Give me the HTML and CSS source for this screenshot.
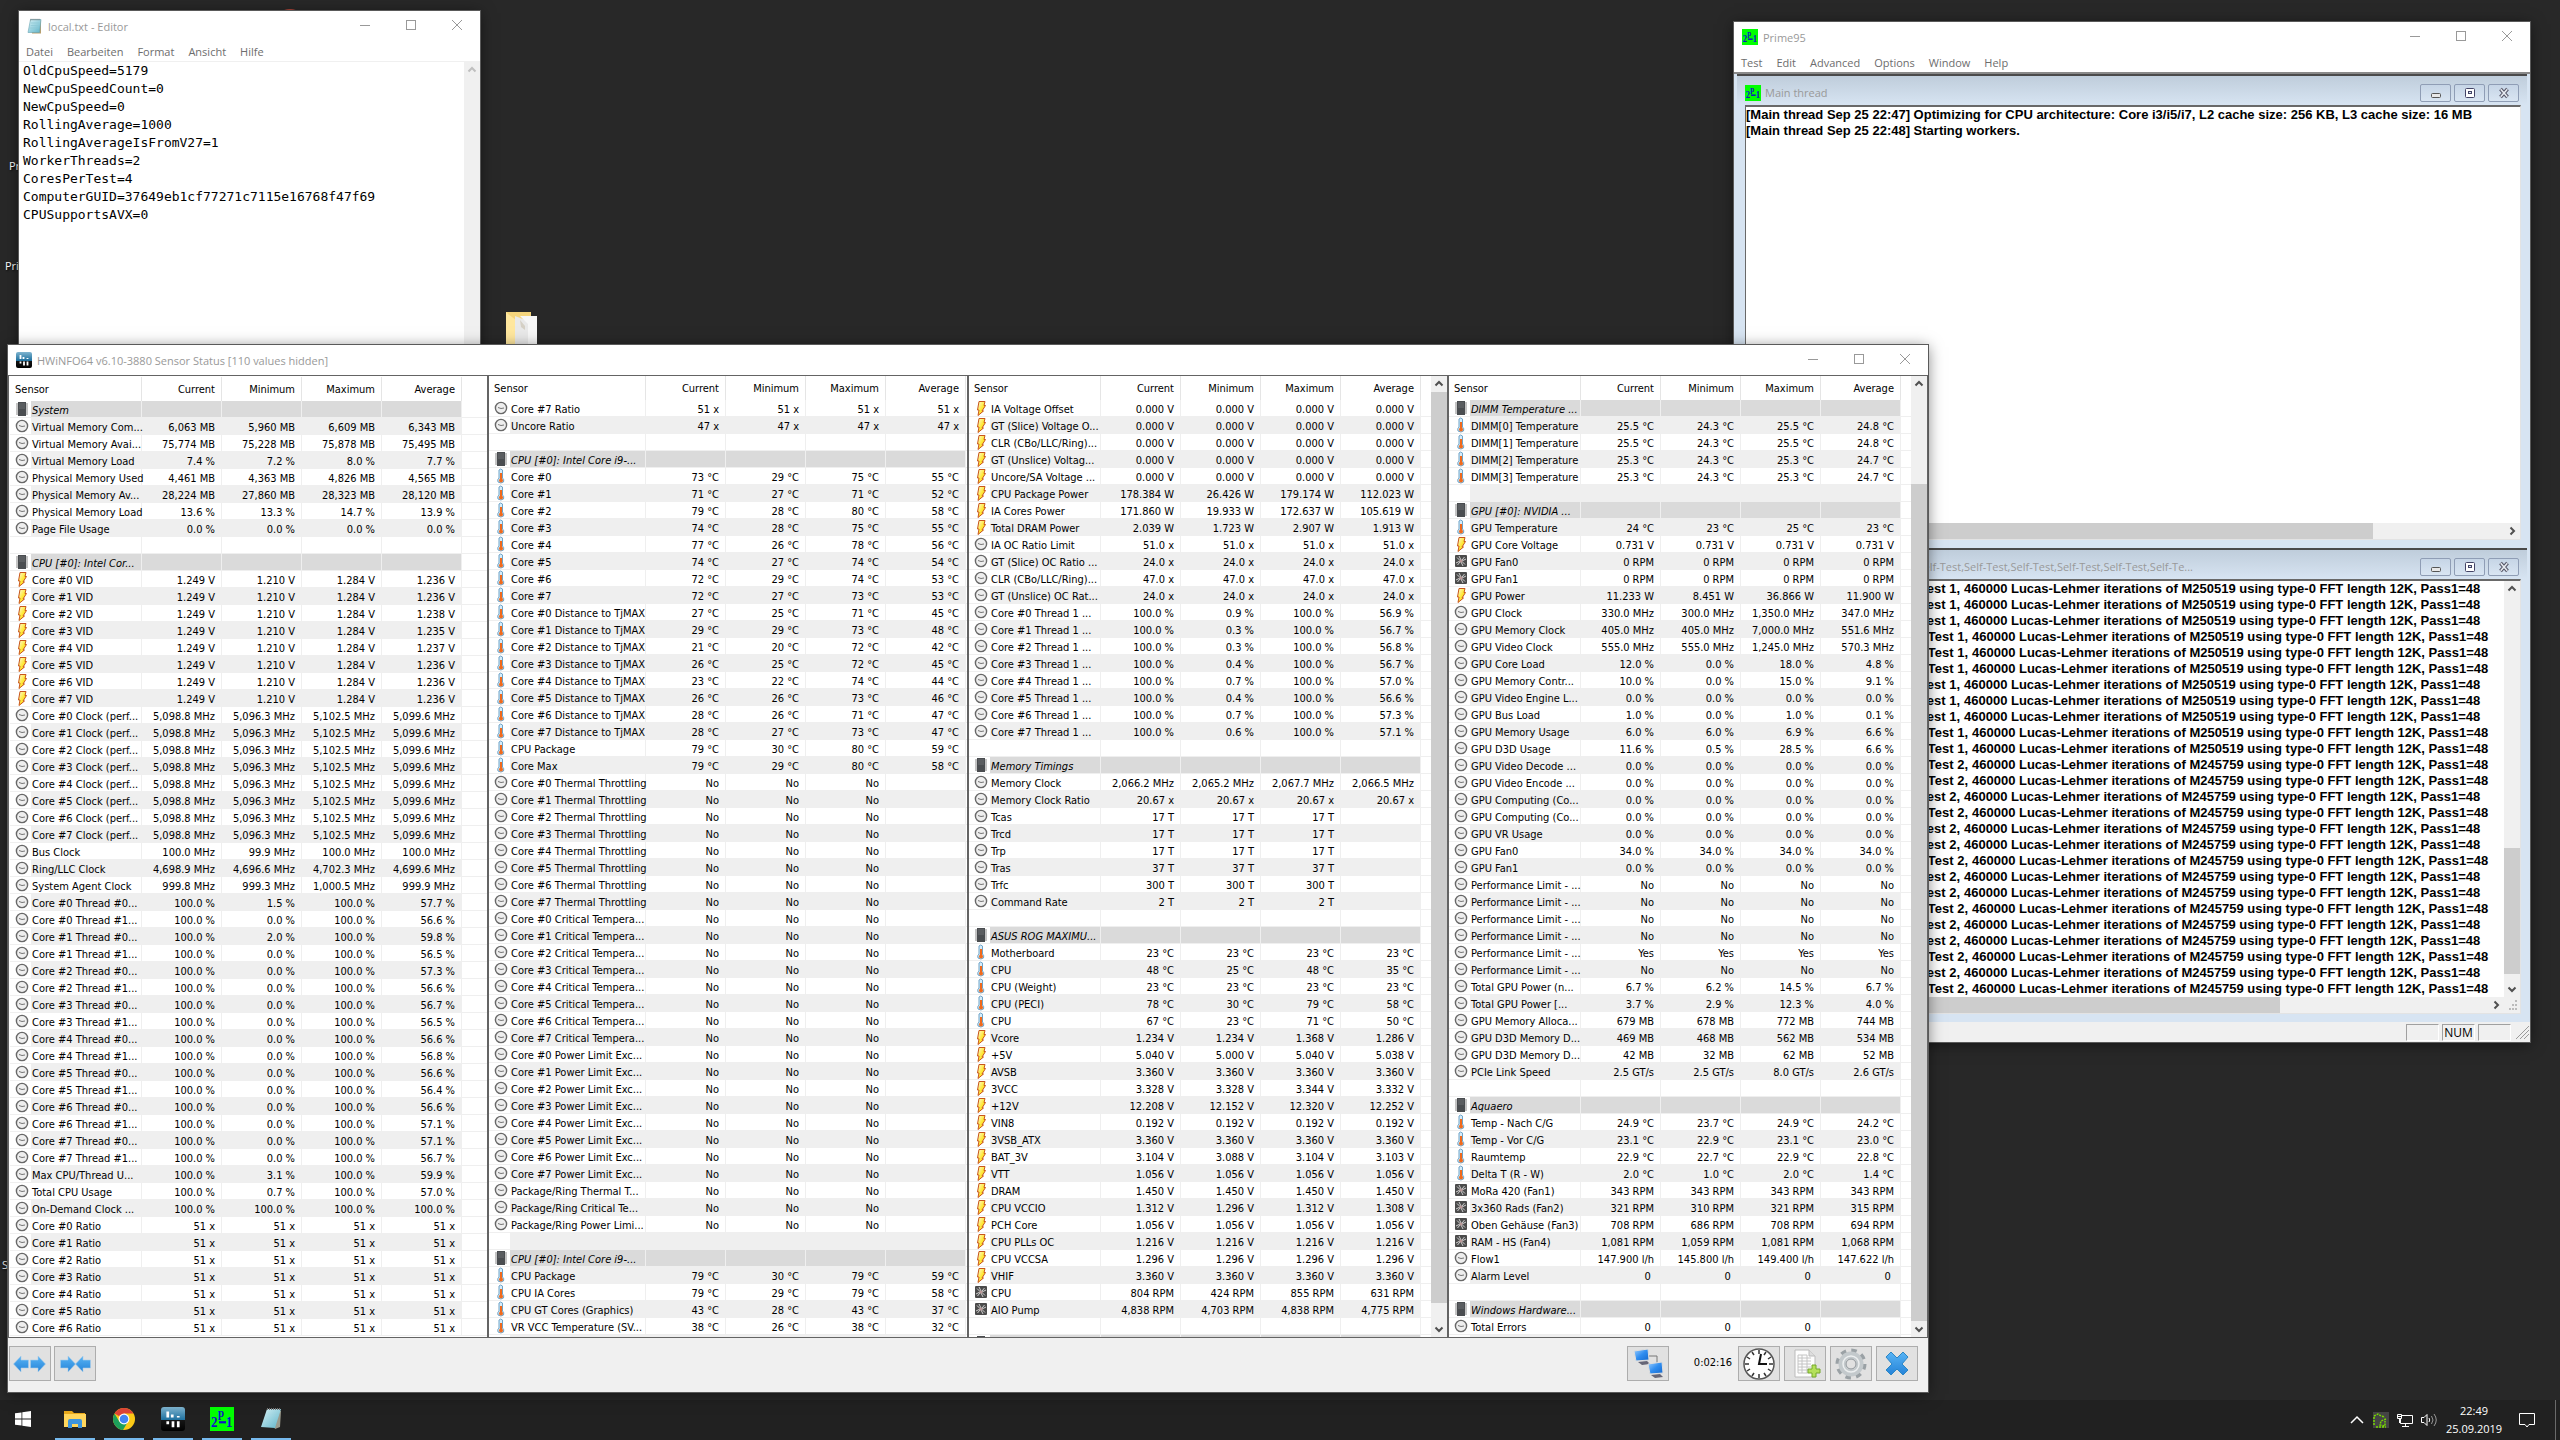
FILE: index.html
```html
<!DOCTYPE html>
<html lang="de">
<head>
  <meta charset="UTF-8">
  <meta name="viewport" content="width=device-width, initial-scale=1.0">
  <title>Desktop</title>
  <link rel="stylesheet" href="styles.css">
</head>
<body>

  <!-- icons used more than once -->
  <svg class="sprite" aria-hidden="true">
    <defs>
      <linearGradient id="gBolt" x1="0" y1="0" x2="1" y2="1">
        <stop offset="0" stop-color="#fffbe0"/><stop offset=".5" stop-color="#ffe93a"/><stop offset="1" stop-color="#f7b500"/>
      </linearGradient>
      <linearGradient id="gHw" x1="0" y1="0" x2="0" y2="1">
        <stop offset="0" stop-color="#7fb4cf"/><stop offset=".55" stop-color="#1c6f9e"/><stop offset=".56" stop-color="#151515"/><stop offset="1" stop-color="#000"/>
      </linearGradient>
      <linearGradient id="gNote" x1="0" y1="0" x2="1" y2="1">
        <stop offset="0" stop-color="#d6f1f6"/><stop offset="1" stop-color="#5fb4c9"/>
      </linearGradient>
      <linearGradient id="gScreen" x1="0" y1="0" x2="1" y2="1">
        <stop offset="0" stop-color="#9fd0ff"/><stop offset=".5" stop-color="#2f8df0"/><stop offset="1" stop-color="#1467cc"/>
      </linearGradient>
      <linearGradient id="gBlue" x1="0" y1="0" x2="0" y2="1">
        <stop offset="0" stop-color="#58b4f5"/><stop offset="1" stop-color="#2583d8"/>
      </linearGradient>
    </defs>
    <symbol id="i-chip" viewBox="0 0 14 16">
      <path d="M1 3h12M1 5h12M1 7h12M1 9h12M1 11h12M1 13h12" stroke="#8a8a8a"/>
      <rect x="3" y="1" width="8" height="14" fill="#4a4d50"/>
      <rect x="4" y="2" width="6" height="6" fill="#5a5d60"/>
    </symbol>
    <symbol id="i-clock" viewBox="0 0 14 14">
      <circle cx="7" cy="7" r="5.6" fill="#eee" stroke="#686868" stroke-width="1.4"/>
      <path d="M4 6.500l3 1 3-.5" stroke="#666" stroke-width=".9" fill="none"/>
    </symbol>
    <symbol id="i-bolt" viewBox="0 0 14 16">
      <path d="M5 1.500h6l-1 4h1.500L8 11h1.500L4 15.500 5 10H3.500z" fill="url(#gBolt)" stroke="#c8561c"/>
    </symbol>
    <symbol id="i-temp" viewBox="0 0 14 16">
      <path d="M5 10V2q1.500-2 3.500 0v8q2 1.500 1 4-2.500 2-5.500 0-1-2.500 1-4z" fill="#d3ecfa" stroke="#6fa3c7"/>
      <rect x="6" y="5" width="2" height="9" fill="#f06a1d"/>
      <circle cx="7" cy="12.500" r="2" fill="#f06a1d"/>
    </symbol>
    <symbol id="i-fan" viewBox="0 0 14 14">
      <rect x="1" y="1" width="12" height="12" rx="1" fill="#4b4b4b"/>
      <path d="M5 2l2 4M9 12L7 8M2 9l4-2M12 5L8 7M3 3.500l3 3M11 10.500l-3-3M10.500 3L8 6M3.500 11L6 8" stroke="#d0d0d0"/>
      <circle cx="7" cy="7" r="1.500" fill="#b99"/>
    </symbol>
    <symbol id="i-hwinfo" viewBox="0 0 16 16">
      <rect x="0" y="0" width="16" height="16" rx="2" fill="url(#gHw)"/>
      <path d="M4.500 3v4M7.500 5v2M11.500 6v1M4.500 9.500v2M8 9.500v4M11.500 9.500v4" stroke="#fff" stroke-width="1.800"/>
    </symbol>
    <symbol id="i-prime" viewBox="0 0 24 22" preserveAspectRatio="none">
      <rect width="24" height="22" fill="#0f0"/>
      <g fill="#1010c8" font-family="Liberation Serif, serif" font-weight="bold">
        <text x="1" y="18" font-size="13">2</text>
        <text x="8" y="9" font-size="11">p</text>
        <text x="16" y="18" font-size="13">1</text>
      </g>
      <rect x="9" y="13" width="7" height="2" fill="#1010c8"/>
    </symbol>
    <symbol id="i-notepad" viewBox="0 0 16 16">
      <path d="M3 2h11v13.500H5z" fill="#b99f6c"/>
      <path d="M3.500 1.500h10.500l-1.500 13H1z" fill="url(#gNote)" stroke="#6aa5b3" stroke-width=".6"/>
      <path d="M4 5h8.500M3.700 7.500h8.500M3.300 10h8.500" stroke="#8cc7d4" stroke-width=".7"/>
      <path d="M4 .8v1.500M6 .8v1.500M8 .8v1.500M10 .8v1.500M12 .8v1.500" stroke="#666" stroke-width=".8"/>
    </symbol>
    <symbol id="i-min" viewBox="0 0 10 10"><path d="M0 5.500h10" stroke="currentColor"/></symbol>
    <symbol id="i-max" viewBox="0 0 10 10"><rect x=".5" y=".5" width="9" height="9" fill="none" stroke="currentColor"/></symbol>
    <symbol id="i-close" viewBox="0 0 10 10"><path d="M0 0l10 10M10 0L0 10" stroke="currentColor"/></symbol>
    <symbol id="i-up" viewBox="0 0 16 16"><path d="M4.500 9.500L8 6l3.500 3.500" fill="none" stroke="currentColor" stroke-width="2"/></symbol>
    <symbol id="i-down" viewBox="0 0 16 16"><path d="M4.500 6.500L8 10l3.500-3.500" fill="none" stroke="currentColor" stroke-width="2"/></symbol>
    <symbol id="i-right" viewBox="0 0 16 16"><path d="M6.500 4.500L10 8l-3.500 3.500" fill="none" stroke="currentColor" stroke-width="2"/></symbol>
    <symbol id="i-mdimin" viewBox="0 0 12 12"><rect x="1.500" y="6.500" width="9" height="4" rx="1" fill="#e8e8e8" stroke="#555"/></symbol>
    <symbol id="i-mdimax" viewBox="0 0 12 12"><rect x="1.500" y="1.500" width="9" height="9" rx="1" fill="#fff" stroke="#446"/><rect x="4.500" y="4.500" width="3" height="2" fill="#d7e4f2" stroke="#446"/></symbol>
    <symbol id="i-mdiclose" viewBox="0 0 12 12"><path d="M2.500 2l7 8M9.500 2l-7 8" stroke="#556" stroke-width="3.600"/><path d="M2.700 2.300l6.600 7.400M9.300 2.300l-6.600 7.400" stroke="#e8ecf2" stroke-width="1.600"/></symbol>
    <symbol id="i-arrow" viewBox="0 0 16 18"><path d="M.5 5h7.500V1L15.500 9 8 17v-4H.5z" fill="url(#gBlue)" stroke="#a9cdea" stroke-width=".6"/></symbol>
  </svg>

  <main class="desktop">

    <div class="shortcut shortcut-1">Prime95</div>
    <div class="shortcut shortcut-2">Prime95</div>
    <div class="shortcut shortcut-3">Steam</div>
    <svg class="desk-ball" viewBox="0 0 30 30" aria-hidden="true"><circle cx="15" cy="15" r="15" fill="#b5483c"/></svg>
    <svg class="desk-folder" viewBox="0 0 32 40" aria-hidden="true">
      <path d="M0 0h25v40H0z" fill="#f5d57c"/>
      <path d="M2 2l8 6v32H0V0z" fill="#ffe79e"/>
      <path d="M9 4l13 5v31H9z" fill="#e9e9e9"/>
      <path d="M14 4h17v36H22V12z" fill="#f7f7f7"/>
      <path d="M14 8l5 6v4l-4-3z" fill="#d5d0c5"/>
    </svg>

    <section class="window notepad">
      <header class="titlebar">
        <svg class="app-icon" aria-hidden="true"><use href="#i-notepad"/></svg>
        <h2 class="title">local.txt - Editor</h2>
        <button class="caption" aria-label="Minimieren"><svg><use href="#i-min"/></svg></button>
        <button class="caption" aria-label="Maximieren"><svg><use href="#i-max"/></svg></button>
        <button class="caption" aria-label="Schließen"><svg><use href="#i-close"/></svg></button>
      </header>
      <nav class="menubar">
        <button>Datei</button><button>Bearbeiten</button><button>Format</button><button>Ansicht</button><button>Hilfe</button>
      </nav>
      <div class="editor">
        <textarea aria-label="Text" spellcheck="false">OldCpuSpeed=5179
NewCpuSpeedCount=0
NewCpuSpeed=0
RollingAverage=1000
RollingAverageIsFromV27=1
WorkerThreads=2
CoresPerTest=4
ComputerGUID=37649eb1cf77271c7115e16768f47f69
CPUSupportsAVX=0</textarea>
        <div class="vscroll disabled"><svg><use href="#i-up"/></svg></div>
      </div>
    </section>

    <section class="window prime">
      <header class="titlebar">
        <svg class="app-icon" aria-hidden="true"><use href="#i-prime"/></svg>
        <h2 class="title">Prime95</h2>
        <button class="caption" aria-label="Minimize"><svg><use href="#i-min"/></svg></button>
        <button class="caption" aria-label="Maximize"><svg><use href="#i-max"/></svg></button>
        <button class="caption" aria-label="Close"><svg><use href="#i-close"/></svg></button>
      </header>
      <nav class="menubar">
        <button>Test</button><button>Edit</button><button>Advanced</button><button>Options</button><button>Window</button><button>Help</button>
      </nav>
      <div class="mdi">
        <section class="child">
          <header class="child-title">
            <svg class="app-icon" aria-hidden="true"><use href="#i-prime"/></svg>
            <h3 class="title">Main thread</h3>
            <button aria-label="Minimize"><svg><use href="#i-mdimin"/></svg></button>
            <button aria-label="Maximize"><svg><use href="#i-mdimax"/></svg></button>
            <button aria-label="Close"><svg><use href="#i-mdiclose"/></svg></button>
          </header>
          <div class="child-body">
            <div class="log">
              <p>[Main thread Sep 25 22:47] Optimizing for CPU architecture: Core i3/i5/i7, L2 cache size: 256 KB, L3 cache size: 16 MB</p>
              <p>[Main thread Sep 25 22:48] Starting workers.</p>
            </div>
            <div class="hscroll"><span class="thumb thumb-main"></span><svg><use href="#i-right"/></svg></div>
          </div>
        </section>
        <section class="child">
          <header class="child-title">
            <svg class="app-icon" aria-hidden="true"><use href="#i-prime"/></svg>
            <h3 class="title"><span class="worker-title">Self-Test,Self-Test,Self-Test,Self-Test,Self-Test,Self-Test,Self-Te...</span></h3>
            <button aria-label="Minimize"><svg><use href="#i-mdimin"/></svg></button>
            <button aria-label="Maximize"><svg><use href="#i-mdimax"/></svg></button>
            <button aria-label="Close"><svg><use href="#i-mdiclose"/></svg></button>
          </header>
          <div class="child-body">
            <div class="log-row">
              <div class="log" id="workerLog"></div>
              <div class="vscroll"><svg><use href="#i-up"/></svg><span class="track track-worker"></span><span class="thumb thumb-worker"></span><svg><use href="#i-down"/></svg></div>
            </div>
            <div class="hscroll">
              <span class="thumb thumb-worker-h"></span><svg><use href="#i-right"/></svg>
              <svg class="grip" viewBox="0 0 16 16"><path d="M11 4h2M8 8h2M11 8h2M5 12h2M8 12h2M11 12h2" stroke="#bbb" stroke-width="2"/></svg>
            </div>
          </div>
        </section>
      </div>
      <footer class="statusbar">
        <span></span><span>NUM</span><span></span>
        <svg class="grip" viewBox="0 0 16 16"><path d="M2 15L15 2M6 15l9-9M10 15l5-5" stroke="#999"/></svg>
      </footer>
    </section>

    <section class="window hwinfo">
      <header class="titlebar">
        <svg class="app-icon" aria-hidden="true"><use href="#i-hwinfo"/></svg>
        <h2 class="title">HWiNFO64 v6.10-3880 Sensor Status [110 values hidden]</h2>
        <button class="caption" aria-label="Minimize"><svg><use href="#i-min"/></svg></button>
        <button class="caption" aria-label="Maximize"><svg><use href="#i-max"/></svg></button>
        <button class="caption" aria-label="Close"><svg><use href="#i-close"/></svg></button>
      </header>
      <div class="panels">
        <div class="panel first"><table class="sensors" id="panel1"></table></div>
        <div class="panel wide"><table class="sensors" id="panel2"></table></div>
        <div class="panel">
          <table class="sensors" id="panel3"></table>
          <div class="vscroll"><svg><use href="#i-up"/></svg><span class="thumb"></span><span class="track track-short"></span><svg><use href="#i-down"/></svg></div>
        </div>
        <div class="panel">
          <table class="sensors" id="panel4"></table>
          <div class="vscroll"><svg><use href="#i-up"/></svg><span class="track track-top"></span><span class="thumb"></span><svg><use href="#i-down"/></svg></div>
        </div>
      </div>
      <footer class="toolbar">
        <button aria-label="Expand"><svg class="pair" viewBox="0 0 34 18"><use href="#i-arrow" width="16" height="18" transform="translate(16 0) scale(-1 1)"/><use href="#i-arrow" x="17" width="16" height="18"/></svg></button>
        <button aria-label="Shrink"><svg class="pair" viewBox="0 0 34 18"><use href="#i-arrow" x="2" width="16" height="18"/><use href="#i-arrow" width="16" height="18" transform="translate(33 0) scale(-1 1)"/></svg></button>
        <span class="spacer"></span>
        <button aria-label="Remote">
          <svg viewBox="0 0 32 32">
            <path d="M16 8h9v10" fill="none" stroke="#777"/>
            <path d="M2 3l14-2 1 11-13 1z" fill="url(#gScreen)" stroke="#ddd"/><path d="M6 14l9-1 3 3-8 1z" fill="#667"/>
            <path d="M16 16l14-2 1 11-13 1z" fill="url(#gScreen)" stroke="#ddd"/><path d="M19 27l9-1 3 3-8 1z" fill="#667"/>
          </svg>
        </button>
        <time class="uptime">0:02:16</time>
        <button aria-label="Clock">
          <svg viewBox="0 0 32 32">
            <circle cx="16" cy="16" r="15" fill="#fff" stroke="#555" stroke-width="1.500"/>
            <path d="M16 2v4M16 26v4M2 16h4M26 16h4M9 4l2 3M23 4l-2 3M9 28l2-3M23 28l-2-3M4 9l3 2M4 23l3-2M28 9l-3 2M28 23l-3-2" stroke="#333" stroke-width="1.500"/>
            <path d="M18 6l-2 10h8" fill="none" stroke="#111" stroke-width="2"/>
          </svg>
        </button>
        <button aria-label="Log">
          <svg viewBox="0 0 32 32">
            <path d="M6 2h14l6 6v21H6z" fill="#fdfdfd" stroke="#bbb"/><path d="M20 2v6h6" fill="#ddd" stroke="#bbb"/>
            <path d="M9 7h9M9 10h13M9 13h13M9 16h13M9 19h13M9 22h10M9 25h10M9 7v18M13 7v18M18 7v18" stroke="#c4c4c4"/>
            <path d="M23 17h4v4h4v4h-4v4h-4v-4h-4v-4h4z" fill="#b4e05a" stroke="#74a82a"/>
          </svg>
        </button>
        <button aria-label="Settings">
          <svg viewBox="0 0 32 32">
            <circle cx="16" cy="16" r="12.500" fill="none" stroke="#9aa1a5" stroke-width="6" stroke-dasharray="5 4.800"/>
            <circle cx="16" cy="16" r="9" fill="none" stroke="#c3c9cc" stroke-width="7"/>
            <circle cx="16" cy="16" r="5" fill="#e1e1e1" stroke="#8d9499"/>
            <circle cx="16" cy="16" r="8" fill="none" stroke="#eceff0" stroke-width="1.500"/>
          </svg>
        </button>
        <button aria-label="Close sensors">
          <svg viewBox="0 0 32 32"><path d="M5 9l5-5 6 6 6-6 5 5-6 7 6 6-5 5-6-6-6 6-5-5 6-6z" fill="url(#gBlue)" stroke="#2b86c5"/></svg>
        </button>
      </footer>
    </section>

  </main>

  <footer class="taskbar">
    <button class="task" aria-label="Start"><svg class="start" viewBox="0 0 16 16"><path d="M0 2.300l6.500-.9v6.200H0zM7.300 1.300L16 0v7.600H7.300zM0 8.400h6.500v6.200L0 13.700zM7.300 8.400H16V16l-8.700-1.300z" fill="#fff"/></svg></button>
    <button class="task open" aria-label="Explorer">
      <svg viewBox="0 0 24 24"><path d="M1 4h8l2 2h11v14H1z" fill="#e8a91c"/><path d="M1 7h22v13H1z" fill="#ffd65c"/><path d="M5 21v-7q0-2 2-2h10q2 0 2 2v7h-4v-4H9v4z" fill="#3d94dc"/></svg>
    </button>
    <button class="task open" aria-label="Chrome">
      <svg viewBox="0 0 24 24"><circle cx="12" cy="12" r="11" fill="#fbc916"/><path d="M12 12L2.500 6.500A11 11 0 0 1 21.500 6.500H12z" fill="#dc4437"/><path d="M2.500 6.500A11 11 0 0 0 11 23l5-8.500-8.700 0z" fill="#1c9f5b"/><circle cx="12" cy="12" r="5.400" fill="#fff"/><circle cx="12" cy="12" r="4.300" fill="#4384f3"/></svg>
    </button>
    <button class="task open" aria-label="HWiNFO64"><svg><use href="#i-hwinfo"/></svg></button>
    <button class="task open" aria-label="Prime95"><svg><use href="#i-prime"/></svg></button>
    <button class="task open" aria-label="Editor">
      <svg viewBox="0 0 24 24"><path d="M8 3l14 1-1 16-5 2z" fill="#9a9a8c"/><path d="M8 2h14l-6 19-14-1z" fill="url(#gNote)"/><path d="M8 2h14" stroke="#777" stroke-dasharray="1 1" stroke-width="2"/></svg>
    </button>
    <span class="spacer"></span>
    <button class="tray" aria-label="Ausgeblendete Symbole"><svg viewBox="0 0 16 16"><path d="M2 11l6-6 6 6" fill="none" stroke="#fff" stroke-width="1.500"/></svg></button>
    <button class="tray" aria-label="Grafik"><svg viewBox="0 0 16 16"><rect width="16" height="16" fill="#444"/><path d="M1 13V4l4-2 3 2 4 1M3 15h10M13 7l-5 2-1 4 5 1V9" fill="none" stroke="#76d900" stroke-width="1.500" stroke-dasharray="2 1"/></svg></button>
    <button class="tray" aria-label="Netzwerk"><svg viewBox="0 0 16 16"><path d="M5 3.500h10.500v8H3.500V7M8.500 12v2.500M5 14.500h7M.5 2.500h4v4h-4zM1 4.500h3M2.500 7v4" fill="none" stroke="#fff"/></svg></button>
    <button class="tray" aria-label="Lautstärke"><svg viewBox="0 0 16 16"><path d="M.5 5.500H3l3-3v11l-3-3H.5z" fill="none" stroke="#fff"/><path d="M8 6q1.500 2 0 4" fill="none" stroke="#fff"/><path d="M10.500 4q3 4 0 8M13 2q4.500 6 0 12" fill="none" stroke="#999"/></svg></button>
    <time class="clock">22:49<br>25.09.2019</time>
    <button class="tray notify" aria-label="Info-Center"><svg viewBox="0 0 16 16"><path d="M.5 1.500h15v11H10L8 15l-2-2.500H.5z" fill="none" stroke="#fff"/></svg></button>
    <span class="peek"></span>
  </footer>

  <script src="app.js"></script>
</body>
</html>
```
FILE: styles.css
```css
* {
  box-sizing: border-box;
}
body {
  margin: 0;
  height: 100vh;
  display: flex;
  flex-direction: column;
  overflow: hidden;
  background: #282828;
  font-family: "Open Sans", "Noto Sans", sans-serif;
  font-size: 11px;
  color: #000;
}
button {
  margin: 0;
  padding: 0;
  border: none;
  background: none;
  font: inherit;
  color: inherit;
}
h2, h3, p {
  margin: 0;
  font-size: inherit;
  font-weight: normal;
}
svg {
  display: block;
}
.sprite {
  position: absolute;
  width: 0;
  height: 0;
}
.spacer {
  flex: 1;
}
.desktop {
  position: relative;
  flex: 1;
  min-height: 0;
}

/* desktop items */
.shortcut {
  position: absolute;
  color: #fff;
  text-shadow: 1px 1px 2px #000;
}
.shortcut-1 { left: 9px; top: 158px; }
.shortcut-2 { left: 5px; top: 258px; }
.shortcut-3 { left: 2px; top: 1257px; }
.desk-ball {
  position: absolute;
  left: 275px;
  top: 9px;
  width: 30px;
}
.desk-folder {
  position: absolute;
  left: 506px;
  top: 312px;
  width: 32px;
}

/* windows */
.window {
  position: absolute;
  display: flex;
  flex-direction: column;
  background: #fff;
  outline: 1px solid #5a5a5a;
  box-shadow: 0 2px 14px rgba(0, 0, 0, 0.5);
}
.notepad {
  left: 19px;
  top: 11px;
  width: 18%;
  height: 400px;
}
.prime {
  left: 1734px;
  right: 30px;
  top: 22px;
  bottom: 358px;
}
.hwinfo {
  left: 8px;
  top: 345px;
  bottom: 8px;
  width: 75%;
}
.titlebar {
  display: flex;
  align-items: center;
  height: 30px;
  padding-left: 8px;
  color: #999;
}
.app-icon {
  width: 16px;
  height: 16px;
  margin-right: 5px;
}
.title {
  flex: 1;
  overflow: hidden;
  white-space: nowrap;
}
.caption {
  width: 46px;
  height: 30px;
  padding-bottom: 2px;
  display: grid;
  place-items: center;
}
.caption svg {
  width: 10px;
  height: 10px;
}
.menubar {
  display: flex;
  height: 20px;
  color: #6d6d6d;
}
.menubar button {
  padding: 0 7px;
}

.vscroll {
  display: flex;
  flex-direction: column;
  width: 16px;
  background: #f0f0f0;
  color: #505050;
}
.vscroll svg, .hscroll svg {
  width: 16px;
  height: 16px;
}
.vscroll.disabled {
  color: #bfbfbf;
}
.vscroll .thumb {
  flex: 1;
  background: #cdcdcd;
}
.hscroll {
  display: flex;
  justify-content: space-between;
  height: 16px;
  background: #f0f0f0;
  color: #505050;
}
.hscroll .thumb {
  background: #cdcdcd;
}

/* editor */
.editor {
  flex: 1;
  display: flex;
  border-top: 1px solid #f0f0f0;
}
.editor textarea {
  flex: 1;
  padding: 0 4px;
  border: none;
  outline: none;
  resize: none;
  overflow: hidden;
  font-family: "DejaVu Sans Mono", "Liberation Mono", monospace;
  font-size: 13px;
  line-height: 18px;
}

/* prime95 */
.mdi {
  flex: 1;
  min-height: 0;
  display: flex;
  flex-direction: column;
  padding: 0 3px;
  border-top: 2px solid #8a8a8a;
  background: #d7e4f2;
}
.child {
  flex: 1;
  min-height: 0;
  display: flex;
  flex-direction: column;
  padding: 0 6px 8px 8px;
  border-top: 2px solid #4a4a4a;
  background: #d7e4f2;
}
.child-title {
  display: flex;
  align-items: center;
  gap: 3px;
  height: 29px;
  margin: 0 -6px 0 -8px;
  padding: 4px 8px 0;
  background: linear-gradient(#bfcddb, #d7e4f2);
  color: #999;
}
.child-title .app-icon {
  margin-right: 1px;
}
.child-title button {
  display: grid;
  place-items: center;
  width: 31px;
  height: 18px;
  border: 1px solid #8f9db5;
  border-radius: 2px;
  background: linear-gradient(#c6d5e6, #d9e5f2);
}
.child-title button svg {
  width: 12px;
  height: 12px;
}
.worker-title {
  display: block;
  width: 428px;
  text-align: right;
}
.child-body {
  flex: 1;
  min-height: 0;
  display: flex;
  flex-direction: column;
  border: 1px solid #e3e3e3;
  border-top: 2px solid #696969;
  border-left: 1px solid #696969;
  background: #fff;
}
.log {
  flex: 1;
  overflow: hidden;
  font-family: "Liberation Sans", Arial, sans-serif;
  font-size: 13px;
  line-height: 16px;
  white-space: nowrap;
}
.log p {
  display: flex;
  font-weight: bold;
}
.log-row {
  flex: 1;
  min-height: 0;
  display: flex;
}
.log-lead {
  flex: none;
  width: 218px;
  padding-right: 4px;
  text-align: right;
}
.log-lead.long {
  width: 226px;
}
.thumb-main {
  width: 81%;
}
.thumb-worker-h {
  width: 69%;
}
.hscroll .thumb-worker-h + svg {
  margin-left: auto;
}
.vscroll .track-worker {
  flex: 2;
}
.vscroll .thumb-worker {
  margin-bottom: 7px;
}
.vscroll .track-short {
  flex: 0 0 18px;
}
.vscroll .track-top {
  flex: 0 0 92px;
}
.statusbar {
  display: flex;
  justify-content: flex-end;
  gap: 3px;
  height: 20px;
  padding: 2px 0 1px;
  background: #f0f0f0;
}
.statusbar span {
  width: 33px;
  border: 1px solid #fff;
  border-top-color: #a0a0a0;
  border-left-color: #a0a0a0;
  font-size: 12px;
  line-height: 15px;
  text-align: center;
}
.statusbar .grip {
  width: 16px;
  height: 16px;
}

/* sensor panels */
.panels {
  flex: 1;
  min-height: 0;
  display: grid;
  grid-template-columns: repeat(4, 1fr);
}
.panel {
  display: flex;
  min-height: 0;
  overflow: hidden;
  border: 1px solid #646464;
}
.panel.first {
  padding: 1px 0 0 1px;
}
.sensors {
  flex: 1;
  height: max-content;
  width: 100%;
  min-width: 0;
  table-layout: fixed;
  border-collapse: separate;
  border-spacing: 0;
  font-family: "DejaVu Sans Condensed", "Noto Sans", sans-serif;
  font-size: 11px;
}
.sensors .col-icon { width: 21px; }
.sensors .col-name { width: 111px; }
.wide .sensors .col-name { width: 136px; }
.sensors .col-value { width: 80px; }
.sensors th {
  height: 24px;
  padding: 0 6px;
  border-right: 1px solid #e5e5e5;
  font-weight: normal;
  text-align: right;
}
.sensors th:first-child {
  padding-left: 5px;
  text-align: left;
}
.sensors th:last-child {
  border: none;
}
.sensors td {
  height: 17px;
  padding: 3px 6px 0 0;
  border-right: 1px solid #efefef;
  border-bottom: 1px solid #efefef;
  line-height: 13px;
  text-align: right;
  white-space: nowrap;
}
.sensors tr:nth-child(even) td {
  background: #efefef;
}
.sensors .group td {
  background: #dadada !important;
}
.sensors td.icon {
  padding: 0 0 0 5px;
  border-right: none;
  background: #fff !important;
}
.sensors td.name {
  padding-left: 1px;
  padding-right: 0;
  text-align: left;
}
.sensors .group .name {
  font-style: italic;
}
.sensors td.rest {
  padding: 0;
  border-right: none;
  background: #fff !important;
}
.sensors .icon svg {
  width: 14px;
  height: 16px;
}
.toolbar {
  display: flex;
  align-items: flex-start;
  gap: 3px;
  height: 54px;
  padding: 8px 10px 0 1px;
  background: #f0f0f0;
}
.toolbar button {
  display: grid;
  place-items: center;
  width: 42px;
  height: 35px;
  border: 1px solid #adadad;
  background: #e1e1e1;
}
.toolbar button:nth-last-child(-n+3) {
  margin-left: 1px;
}
.toolbar svg {
  width: 32px;
  height: 32px;
}
.toolbar .pair {
  width: 34px;
  height: 18px;
}
.uptime {
  margin: 0 3px 0 22px;
  font-family: "DejaVu Sans Condensed", "Noto Sans", sans-serif;
  line-height: 33px;
}

/* taskbar */
.taskbar {
  display: flex;
  align-items: center;
  height: 40px;
  background: #212121;
  color: #fff;
}
.task {
  display: grid;
  place-items: center;
  width: 40px;
  height: 40px;
  margin-right: 9px;
  border-bottom: 2px solid transparent;
}
.task:first-child {
  width: 46px;
}
.task.open {
  border-color: #76b9ed;
}
.task svg {
  width: 24px;
  height: 24px;
}
.task .start {
  width: 16px;
  height: 16px;
}
.tray {
  width: 24px;
  display: grid;
  place-items: center;
}
.tray svg {
  width: 16px;
  height: 16px;
}
.clock {
  width: 66px;
  line-height: 18px;
  text-align: center;
}
.notify {
  width: 40px;
}
.peek {
  width: 5px;
  height: 40px;
  margin-left: 8px;
  border-left: 1px solid #6a6a6a;
}
```
FILE: app.js
```js
// icon letters: c = clock, v = bolt, t = thermometer, f = fan, g = group header
const icons = { c: 'i-clock', v: 'i-bolt', t: 'i-temp', f: 'i-fan', g: 'i-chip' };

// same row for several cores, {n} is the core number
function cores(icon, name, values) {
  return values.map((v, n) => icon + '|' + name.replace('{n}', n) + '|' + v);
}
function same(count, value) {
  return Array(count).fill(value);
}

const no3 = 'No|No|No|';

const panel1 = [
  'g|System',
  'c|Virtual Memory Com...|6,063 MB|5,960 MB|6,609 MB|6,343 MB',
  'c|Virtual Memory Avai...|75,774 MB|75,228 MB|75,878 MB|75,495 MB',
  'c|Virtual Memory Load|7.4 %|7.2 %|8.0 %|7.7 %',
  'c|Physical Memory Used|4,461 MB|4,363 MB|4,826 MB|4,565 MB',
  'c|Physical Memory Av...|28,224 MB|27,860 MB|28,323 MB|28,120 MB',
  'c|Physical Memory Load|13.6 %|13.3 %|14.7 %|13.9 %',
  'c|Page File Usage|0.0 %|0.0 %|0.0 %|0.0 %',
  '',
  'g|CPU [#0]: Intel Cor...',
  ...cores('v', 'Core #{n} VID', ['6', '6', '8', '5', '7', '6', '6', '6'].map(d => '1.249 V|1.210 V|1.284 V|1.23' + d + ' V')),
  ...cores('c', 'Core #{n} Clock (perf...', same(8, '5,098.8 MHz|5,096.3 MHz|5,102.5 MHz|5,099.6 MHz')),
  'c|Bus Clock|100.0 MHz|99.9 MHz|100.0 MHz|100.0 MHz',
  'c|Ring/LLC Clock|4,698.9 MHz|4,696.6 MHz|4,702.3 MHz|4,699.6 MHz',
  'c|System Agent Clock|999.8 MHz|999.3 MHz|1,000.5 MHz|999.9 MHz',
  'c|Core #0 Thread #0...|100.0 %|1.5 %|100.0 %|57.7 %',
  'c|Core #0 Thread #1...|100.0 %|0.0 %|100.0 %|56.6 %',
  'c|Core #1 Thread #0...|100.0 %|2.0 %|100.0 %|59.8 %',
  'c|Core #1 Thread #1...|100.0 %|0.0 %|100.0 %|56.5 %',
  'c|Core #2 Thread #0...|100.0 %|0.0 %|100.0 %|57.3 %',
  'c|Core #2 Thread #1...|100.0 %|0.0 %|100.0 %|56.6 %',
  'c|Core #3 Thread #0...|100.0 %|0.0 %|100.0 %|56.7 %',
  'c|Core #3 Thread #1...|100.0 %|0.0 %|100.0 %|56.5 %',
  'c|Core #4 Thread #0...|100.0 %|0.0 %|100.0 %|56.6 %',
  'c|Core #4 Thread #1...|100.0 %|0.0 %|100.0 %|56.8 %',
  'c|Core #5 Thread #0...|100.0 %|0.0 %|100.0 %|56.6 %',
  'c|Core #5 Thread #1...|100.0 %|0.0 %|100.0 %|56.4 %',
  'c|Core #6 Thread #0...|100.0 %|0.0 %|100.0 %|56.6 %',
  'c|Core #6 Thread #1...|100.0 %|0.0 %|100.0 %|57.1 %',
  'c|Core #7 Thread #0...|100.0 %|0.0 %|100.0 %|57.1 %',
  'c|Core #7 Thread #1...|100.0 %|0.0 %|100.0 %|56.7 %',
  'c|Max CPU/Thread U...|100.0 %|3.1 %|100.0 %|59.9 %',
  'c|Total CPU Usage|100.0 %|0.7 %|100.0 %|57.0 %',
  'c|On-Demand Clock ...|100.0 %|100.0 %|100.0 %|100.0 %',
  ...cores('c', 'Core #{n} Ratio', same(7, '51 x|51 x|51 x|51 x')),
];

const panel2 = [
  'c|Core #7 Ratio|51 x|51 x|51 x|51 x',
  'c|Uncore Ratio|47 x|47 x|47 x|47 x',
  '',
  'g|CPU [#0]: Intel Core i9-...',
  ...cores('t', 'Core #{n}', [
    '73 °C|29 °C|75 °C|55 °C',
    '71 °C|27 °C|71 °C|52 °C',
    '79 °C|28 °C|80 °C|58 °C',
    '74 °C|28 °C|75 °C|55 °C',
    '77 °C|26 °C|78 °C|56 °C',
    '74 °C|27 °C|74 °C|54 °C',
    '72 °C|29 °C|74 °C|53 °C',
    '72 °C|27 °C|73 °C|53 °C',
  ]),
  ...cores('t', 'Core #{n} Distance to TjMAX', [
    '27 °C|25 °C|71 °C|45 °C',
    '29 °C|29 °C|73 °C|48 °C',
    '21 °C|20 °C|72 °C|42 °C',
    '26 °C|25 °C|72 °C|45 °C',
    '23 °C|22 °C|74 °C|44 °C',
    '26 °C|26 °C|73 °C|46 °C',
    '28 °C|26 °C|71 °C|47 °C',
    '28 °C|27 °C|73 °C|47 °C',
  ]),
  't|CPU Package|79 °C|30 °C|80 °C|59 °C',
  't|Core Max|79 °C|29 °C|80 °C|58 °C',
  ...cores('c', 'Core #{n} Thermal Throttling', same(8, no3)),
  ...cores('c', 'Core #{n} Critical Tempera...', same(8, no3)),
  ...cores('c', 'Core #{n} Power Limit Exc...', same(8, no3)),
  'c|Package/Ring Thermal T...|' + no3,
  'c|Package/Ring Critical Te...|' + no3,
  'c|Package/Ring Power Limi...|' + no3,
  '',
  'g|CPU [#0]: Intel Core i9-...',
  't|CPU Package|79 °C|30 °C|79 °C|59 °C',
  't|CPU IA Cores|79 °C|29 °C|79 °C|58 °C',
  't|CPU GT Cores (Graphics)|43 °C|28 °C|43 °C|37 °C',
  't|VR VCC Temperature (SV...|38 °C|26 °C|38 °C|32 °C',
  '',
];

const zeroV = '0.000 V|0.000 V|0.000 V|0.000 V';
const panel3 = [
  'v|IA Voltage Offset|' + zeroV,
  'v|GT (Slice) Voltage O...|' + zeroV,
  'v|CLR (CBo/LLC/Ring)...|' + zeroV,
  'v|GT (Unslice) Voltag...|' + zeroV,
  'v|Uncore/SA Voltage ...|' + zeroV,
  'v|CPU Package Power|178.384 W|26.426 W|179.174 W|112.023 W',
  'v|IA Cores Power|171.860 W|19.933 W|172.637 W|105.619 W',
  'v|Total DRAM Power|2.039 W|1.723 W|2.907 W|1.913 W',
  'c|IA OC Ratio Limit|51.0 x|51.0 x|51.0 x|51.0 x',
  'c|GT (Slice) OC Ratio ...|24.0 x|24.0 x|24.0 x|24.0 x',
  'c|CLR (CBo/LLC/Ring)...|47.0 x|47.0 x|47.0 x|47.0 x',
  'c|GT (Unslice) OC Rat...|24.0 x|24.0 x|24.0 x|24.0 x',
  ...cores('c', 'Core #{n} Thread 1 ...', [
    '100.0 %|0.9 %|100.0 %|56.9 %',
    '100.0 %|0.3 %|100.0 %|56.7 %',
    '100.0 %|0.3 %|100.0 %|56.8 %',
    '100.0 %|0.4 %|100.0 %|56.7 %',
    '100.0 %|0.7 %|100.0 %|57.0 %',
    '100.0 %|0.4 %|100.0 %|56.6 %',
    '100.0 %|0.7 %|100.0 %|57.3 %',
    '100.0 %|0.6 %|100.0 %|57.1 %',
  ]),
  '',
  'g|Memory Timings',
  'c|Memory Clock|2,066.2 MHz|2,065.2 MHz|2,067.7 MHz|2,066.5 MHz',
  'c|Memory Clock Ratio|20.67 x|20.67 x|20.67 x|20.67 x',
  'c|Tcas|17 T|17 T|17 T|',
  'c|Trcd|17 T|17 T|17 T|',
  'c|Trp|17 T|17 T|17 T|',
  'c|Tras|37 T|37 T|37 T|',
  'c|Trfc|300 T|300 T|300 T|',
  'c|Command Rate|2 T|2 T|2 T|',
  '',
  'g|ASUS ROG MAXIMU...',
  't|Motherboard|23 °C|23 °C|23 °C|23 °C',
  't|CPU|48 °C|25 °C|48 °C|35 °C',
  't|CPU (Weight)|23 °C|23 °C|23 °C|23 °C',
  't|CPU (PECI)|78 °C|30 °C|79 °C|58 °C',
  't|CPU|67 °C|23 °C|71 °C|50 °C',
  'v|Vcore|1.234 V|1.234 V|1.368 V|1.286 V',
  'v|+5V|5.040 V|5.000 V|5.040 V|5.038 V',
  'v|AVSB|3.360 V|3.360 V|3.360 V|3.360 V',
  'v|3VCC|3.328 V|3.328 V|3.344 V|3.332 V',
  'v|+12V|12.208 V|12.152 V|12.320 V|12.252 V',
  'v|VIN8|0.192 V|0.192 V|0.192 V|0.192 V',
  'v|3VSB_ATX|3.360 V|3.360 V|3.360 V|3.360 V',
  'v|BAT_3V|3.104 V|3.088 V|3.104 V|3.103 V',
  'v|VTT|1.056 V|1.056 V|1.056 V|1.056 V',
  'v|DRAM|1.450 V|1.450 V|1.450 V|1.450 V',
  'v|CPU VCCIO|1.312 V|1.296 V|1.312 V|1.308 V',
  'v|PCH Core|1.056 V|1.056 V|1.056 V|1.056 V',
  'v|CPU PLLs OC|1.216 V|1.216 V|1.216 V|1.216 V',
  'v|CPU VCCSA|1.296 V|1.296 V|1.296 V|1.296 V',
  'v|VHIF|3.360 V|3.360 V|3.360 V|3.360 V',
  'f|CPU|804 RPM|424 RPM|855 RPM|631 RPM',
  'f|AIO Pump|4,838 RPM|4,703 RPM|4,838 RPM|4,775 RPM',
  '',
  'g|',
];

const zeroP = '0.0 %|0.0 %|0.0 %|0.0 %';
const no4 = 'No|No|No|No';
const panel4 = [
  'g|DIMM Temperature ...',
  't|DIMM[0] Temperature|25.5 °C|24.3 °C|25.5 °C|24.8 °C',
  't|DIMM[1] Temperature|25.5 °C|24.3 °C|25.5 °C|24.8 °C',
  't|DIMM[2] Temperature|25.3 °C|24.3 °C|25.3 °C|24.7 °C',
  't|DIMM[3] Temperature|25.3 °C|24.3 °C|25.3 °C|24.7 °C',
  '',
  'g|GPU [#0]: NVIDIA ...',
  't|GPU Temperature|24 °C|23 °C|25 °C|23 °C',
  'v|GPU Core Voltage|0.731 V|0.731 V|0.731 V|0.731 V',
  'f|GPU Fan0|0 RPM|0 RPM|0 RPM|0 RPM',
  'f|GPU Fan1|0 RPM|0 RPM|0 RPM|0 RPM',
  'v|GPU Power|11.233 W|8.451 W|36.866 W|11.900 W',
  'c|GPU Clock|330.0 MHz|300.0 MHz|1,350.0 MHz|347.0 MHz',
  'c|GPU Memory Clock|405.0 MHz|405.0 MHz|7,000.0 MHz|551.6 MHz',
  'c|GPU Video Clock|555.0 MHz|555.0 MHz|1,245.0 MHz|570.3 MHz',
  'c|GPU Core Load|12.0 %|0.0 %|18.0 %|4.8 %',
  'c|GPU Memory Contr...|10.0 %|0.0 %|15.0 %|9.1 %',
  'c|GPU Video Engine L...|' + zeroP,
  'c|GPU Bus Load|1.0 %|0.0 %|1.0 %|0.1 %',
  'c|GPU Memory Usage|6.0 %|6.0 %|6.9 %|6.6 %',
  'c|GPU D3D Usage|11.6 %|0.5 %|28.5 %|6.6 %',
  'c|GPU Video Decode ...|' + zeroP,
  'c|GPU Video Encode ...|' + zeroP,
  'c|GPU Computing (Co...|' + zeroP,
  'c|GPU Computing (Co...|' + zeroP,
  'c|GPU VR Usage|' + zeroP,
  'c|GPU Fan0|34.0 %|34.0 %|34.0 %|34.0 %',
  'c|GPU Fan1|' + zeroP,
  'c|Performance Limit - ...|' + no4,
  'c|Performance Limit - ...|' + no4,
  'c|Performance Limit - ...|' + no4,
  'c|Performance Limit - ...|' + no4,
  'c|Performance Limit - ...|Yes|Yes|Yes|Yes',
  'c|Performance Limit - ...|' + no4,
  'c|Total GPU Power (n...|6.7 %|6.2 %|14.5 %|6.7 %',
  'c|Total GPU Power [...|3.7 %|2.9 %|12.3 %|4.0 %',
  'c|GPU Memory Alloca...|679 MB|678 MB|772 MB|744 MB',
  'c|GPU D3D Memory D...|469 MB|468 MB|562 MB|534 MB',
  'c|GPU D3D Memory D...|42 MB|32 MB|62 MB|52 MB',
  'c|PCIe Link Speed|2.5 GT/s|2.5 GT/s|8.0 GT/s|2.6 GT/s',
  '',
  'g|Aquaero',
  't|Temp - Nach C/G|24.9 °C|23.7 °C|24.9 °C|24.2 °C',
  't|Temp - Vor C/G|23.1 °C|22.9 °C|23.1 °C|23.0 °C',
  't|Raumtemp|22.9 °C|22.7 °C|22.9 °C|22.8 °C',
  't|Delta T (R - W)|2.0 °C|1.0 °C|2.0 °C|1.4 °C',
  'f|MoRa 420 (Fan1)|343 RPM|343 RPM|343 RPM|343 RPM',
  'f|3x360 Rads (Fan2)|321 RPM|310 RPM|321 RPM|315 RPM',
  'f|Oben Gehäuse (Fan3)|708 RPM|686 RPM|708 RPM|694 RPM',
  'f|RAM - HS (Fan4)|1,081 RPM|1,059 RPM|1,081 RPM|1,068 RPM',
  'c|Flow1|147.900 l/h|145.800 l/h|149.400 l/h|147.622 l/h',
  'c|Alarm Level|0&nbsp;|0&nbsp;|0&nbsp;|0&nbsp;',
  '',
  'g|Windows Hardware...',
  'c|Total Errors|0&nbsp;|0&nbsp;|0&nbsp;|',
  '',
];

function fillPanel(id, rows) {
  let html = '<colgroup><col class="col-icon"><col class="col-name">' +
    '<col class="col-value">'.repeat(4) + '<col></colgroup>' +
    '<thead><tr><th colspan="2">Sensor</th><th>Current</th><th>Minimum</th><th>Maximum</th><th>Average</th><th></th></tr></thead><tbody>';
  for (const row of rows) {
    const [icon, name = '', ...values] = row.split('|');
    const svg = icon ? `<svg><use href="#${icons[icon]}"/></svg>` : '';
    html += `<tr${icon === 'g' ? ' class="group"' : ''}><td class="icon">${svg}</td><td class="name">${name}</td>`;
    for (let i = 0; i < 4; i++) html += `<td>${values[i] || ''}</td>`;
    html += '<td class="rest"></td></tr>';
  }
  document.getElementById(id).innerHTML = html + '</tbody>';
}

fillPanel('panel1', panel1);
fillPanel('panel2', panel2);
fillPanel('panel3', panel3);
fillPanel('panel4', panel4);

// a = worker with one digit, b = longer prefix
const order = 'aaabbbaaabbbbabaabaabaabab';
document.getElementById('workerLog').innerHTML = [...order].map((kind, i) => {
  const test = i < 11 ? 1 : 2;
  const exponent = test === 1 ? 'M250519' : 'M245759';
  return `<p><span class="log-lead${kind === 'b' ? ' long' : ''}">Test ${test},</span>` +
    `460000 Lucas-Lehmer iterations of ${exponent} using type-0 FFT length 12K, Pass1=48</p>`;
}).join('');
```
